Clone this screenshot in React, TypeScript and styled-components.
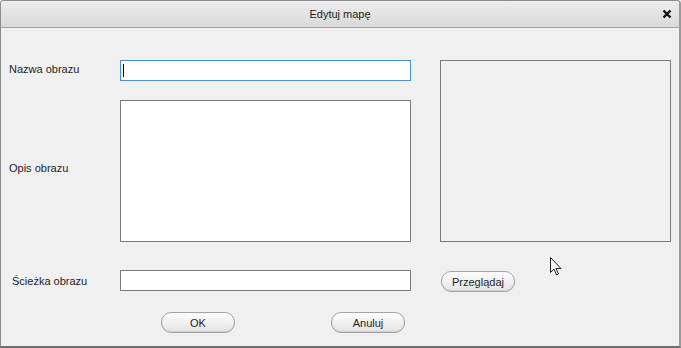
import React from "react";
import styled, { createGlobalStyle } from "styled-components";

const Global = createGlobalStyle`
  html, body { margin: 0; padding: 0; background: #f0f0f0; }
  body { font-family: "Liberation Sans", Arial, sans-serif; font-size: 11px; color: #1e1e1e; }
  * { box-sizing: border-box; }
`;

const Window = styled.div`
  position: relative;
  width: 681px;
  height: 348px;
  background: #f0f0f0;
  border: 1px solid #8c8c8c;
  border-bottom: 2px solid #6e6e6e;
  border-right: 2px solid #9a9a9a;
  border-radius: 4px 4px 0 0;
  display: flex;
  flex-direction: column;
  overflow: hidden;
`;

const TitleBar = styled.div`
  height: 27px;
  flex: none;
  display: flex;
  align-items: center;
  justify-content: center;
  position: relative;
  background: linear-gradient(#ededed, #d9d9d9);
  border-bottom: 1px solid #a3a3a3;
  font-size: 11px;
  color: #222;
`;

const Close = styled.span`
  position: absolute;
  right: 7px;
  top: 8px;
  width: 10px;
  height: 10px;
  display: flex;
`;

const Body = styled.div`
  display: grid;
  grid-template-columns: 90px 291px 231px;
  grid-template-rows: 21px 19px 142px 28px 21px 21px 21px;
  column-gap: 29px;
  padding-top: 32px;
`;

const Label = styled.div<{ $indent?: number; $row: string; $shift?: number }>`
  grid-column: 1;
  grid-row: ${(p) => p.$row};
  display: flex;
  align-items: center;
  padding-left: ${(p) => p.$indent ?? 8}px;
  padding-bottom: ${(p) => p.$shift ?? 0}px;
  white-space: nowrap;
`;

const Field = styled.div<{ $row: string; $focused?: boolean }>`
  grid-column: 2;
  grid-row: ${(p) => p.$row};
  background: #fff;
  border: 1px solid ${(p) => (p.$focused ? "#4a90d6" : "#7b7b7b")};
  position: relative;
`;

const Caret = styled.span`
  position: absolute;
  left: 2px;
  top: 3px;
  width: 1px;
  height: 13px;
  background: #000;
`;

const Preview = styled.div`
  grid-column: 3;
  grid-row: 1 / 4;
  border: 1px solid #7b7b7b;
  background: #f0f0f0;
`;

const Button = styled.button`
  width: 74px;
  height: 21px;
  border-radius: 10px;
  border: 1px solid #a4a4a4;
  background: linear-gradient(#fdfdfd, #e4e4e4);
  font-family: "Liberation Sans", Arial, sans-serif;
  font-size: 11px;
  color: #1e1e1e;
  padding: 0;
  box-shadow: inset 0 -1px 0 #d0d0d0;
`;

const BrowseCell = styled.div`
  grid-column: 3;
  grid-row: 5 / 7;
  padding-top: 1px;
  margin-left: 1px;
`;

const Buttons = styled.div`
  grid-column: 1 / 4;
  grid-row: 7;
  display: flex;
  gap: 96px;
  padding-left: 160px;
`;

const Pointer = styled.svg`
  position: absolute;
  left: 549px;
  top: 256px;
`;

export default function App() {
  return (
    <>
      <Global />
      <Window>
        <TitleBar>
          Edytuj mapę
          <Close>
            <svg width="10" height="10" viewBox="0 0 10 10">
              <path d="M1.5 1.5 L8.5 8.5 M8.5 1.5 L1.5 8.5" stroke="#111" strokeWidth="2.4" />
            </svg>
          </Close>
        </TitleBar>
        <Body>
          <Label $row="1" $shift={3}>Nazwa obrazu</Label>
          <Field $row="1" $focused>
            <Caret />
          </Field>
          <Preview />
          <Label $row="3" $shift={7}>Opis obrazu</Label>
          <Field $row="3" />
          <Label $row="5" $indent={11}>Ścieżka obrazu</Label>
          <Field $row="5" />
          <BrowseCell>
            <Button>Przeglądaj</Button>
          </BrowseCell>
          <Buttons>
            <Button>OK</Button>
            <Button>Anuluj</Button>
          </Buttons>
        </Body>
        <Pointer width="13" height="20" viewBox="0 0 13 20">
          <path d="M0.5 0.5 L0.5 15.5 L4 12 L6.5 18 L8.5 17 L6 11.5 L11 11.5 Z" fill="#f6f6f6" stroke="#222" strokeWidth="1" />
        </Pointer>
      </Window>
    </>
  );
}
